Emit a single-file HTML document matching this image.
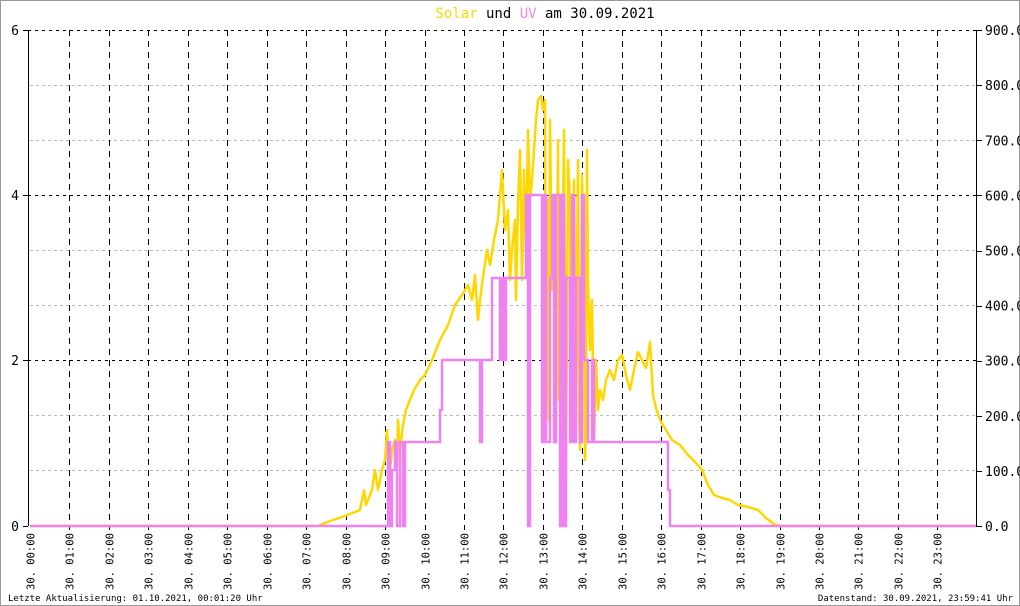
<!DOCTYPE html>
<html><head><meta charset="utf-8"><style>
html,body{margin:0;padding:0;background:#fff}
svg{display:block}
text{font-family:"DejaVu Sans Mono","Liberation Mono",monospace}
</style></head><body>
<svg width="1020" height="606" viewBox="0 0 1020 606" xmlns="http://www.w3.org/2000/svg">
<rect x="0.5" y="0.5" width="1019" height="605" fill="#fff" stroke="#999"/>
<text x="545" y="18" font-size="14" text-anchor="middle"><tspan fill="#ffd700">Solar</tspan><tspan fill="#000"> und </tspan><tspan fill="#ee82ee">UV</tspan><tspan fill="#000"> am 30.09.2021</tspan></text>
<g stroke="#bbb" stroke-dasharray="3,3" stroke-width="1">
<line x1="30" y1="85.5" x2="976" y2="85.5"/><line x1="30" y1="140.5" x2="976" y2="140.5"/>
<line x1="30" y1="250.5" x2="976" y2="250.5"/><line x1="30" y1="305.5" x2="976" y2="305.5"/>
<line x1="30" y1="415.5" x2="976" y2="415.5"/><line x1="30" y1="470.5" x2="976" y2="470.5"/>
</g>
<g stroke="#000" stroke-dasharray="3,4" stroke-width="1">
<line x1="28" y1="30.5" x2="976" y2="30.5"/><line x1="28" y1="195.5" x2="976" y2="195.5"/><line x1="28" y1="360.5" x2="976" y2="360.5"/>
</g>
<g id="vl" stroke="#000" stroke-dasharray="6,5" stroke-width="1"></g>
<line x1="28.5" y1="30" x2="28.5" y2="526" stroke="#000"/>
<line x1="976.5" y1="30" x2="976.5" y2="526" stroke="#000"/>
<g stroke="#000"><line x1="23" y1="30.5" x2="28" y2="30.5"/><line x1="23" y1="195.5" x2="28" y2="195.5"/><line x1="23" y1="360.5" x2="28" y2="360.5"/><line x1="23" y1="526.5" x2="28" y2="526.5"/></g>
<g font-size="13" text-anchor="end"><text x="19" y="35">6</text><text x="19" y="200">4</text><text x="19" y="365">2</text><text x="19" y="531">0</text></g>
<g id="rt" font-size="13"></g>
<polyline fill="none" stroke="#ffd700" stroke-width="2.5" stroke-linejoin="round" points="30,526 318,526 330,521 345,516 360,510 364,490 366,505 368,500 372,490 375,470 378,490 382,470 385,460 387,430 389,480 392,450 395,440 397,470 398,420 400,450 403,425 406,410 410,400 414,390 420,380 425,375 432,360 440,340 448,325 455,305 462,295 468,285 472,300 475,275 478,320 480,300 484,270 487,250 490,265 494,240 498,220 502,170 505,230 508,210 510,280 512,250 515,220 516,300 518,205 520,150 522,280 524,170 526,250 528,130 530,200 532,180 534,150 536,120 538,100 541,96 543,110 545,100 546,440 548,200 549,420 550,120 552,290 554,240 556,440 558,140 559,400 560,200 562,310 564,130 566,480 568,160 570,200 571,420 572,320 574,180 576,380 578,160 579,420 580,450 582,175 584,250 585,460 586,430 587,150 588,280 590,350 592,300 594,440 596,360 598,410 600,390 603,400 606,380 610,370 614,380 618,360 622,355 626,375 630,390 634,370 638,352 642,360 646,368 650,342 653,395 656,408 660,420 666,430 672,440 680,445 688,455 695,462 702,470 708,485 714,495 722,498 730,500 738,505 748,507 758,510 766,518 774,524 780,526 976,526"/>
<polyline fill="none" stroke="#ee82ee" stroke-width="2.5" points="30,526 388,526 388,442 390,442 390,526 392,526 392,470 395,470 395,442 397,442 397,526 400,526 400,442 403,442 403,526 405,526 405,442 440,442 440,410 442,410 442,360 480,360 480,442 482,442 482,360 492,360 492,278 500,278 500,360 502,360 502,278 504,278 504,360 506,360 506,278 526,278 526,195 528,195 528,526 530,526 530,195 542,195 542,442 544,442 544,195 546,195 546,442 550,442 550,278 552,278 552,195 554,195 554,442 556,442 556,195 560,195 560,526 562,526 562,195 564,195 564,526 566,526 566,278 570,278 570,442 572,442 572,195 574,195 574,442 576,442 576,278 580,278 580,442 582,442 582,195 584,195 584,360 588,360 588,442 592,442 592,360 594,360 594,442 668,442 668,490 670,490 670,526 976,526"/>
<g id="xl" font-size="10.5"></g>
<text x="8" y="601" font-size="9">Letzte Aktualisierung: 01.10.2021, 00:01:20 Uhr</text>
<text x="1013" y="601" font-size="9" text-anchor="end">Datenstand: 30.09.2021, 23:59:41 Uhr</text>
<script>
var ns="http://www.w3.org/2000/svg",vl=document.getElementById('vl'),xl=document.getElementById('xl'),rt=document.getElementById('rt');
for(var i=0;i<24;i++){var x=Math.round(30+i*39.45)+0.5;
if(i>0){var l=document.createElementNS(ns,'line');l.setAttribute('x1',x);l.setAttribute('x2',x);l.setAttribute('y1',30);l.setAttribute('y2',530);vl.appendChild(l);}
var t=document.createElementNS(ns,'text');t.setAttribute('transform','translate('+(x+4)+',590) rotate(-90)');t.textContent='30. '+(i<10?'0':'')+i+':00';xl.appendChild(t);}
for(var k=0;k<=9;k++){var y=526-k*55.1;var t=document.createElementNS(ns,'text');t.setAttribute('x',985);t.setAttribute('y',y+5);t.textContent=(k*100)+'.0';rt.appendChild(t);
var l=document.createElementNS(ns,'line');l.setAttribute('x1',976);l.setAttribute('x2',982);l.setAttribute('y1',Math.round(y)+0.5);l.setAttribute('y2',Math.round(y)+0.5);l.setAttribute('stroke','#000');rt.appendChild(l);}
</script>
</svg>
</body></html>
